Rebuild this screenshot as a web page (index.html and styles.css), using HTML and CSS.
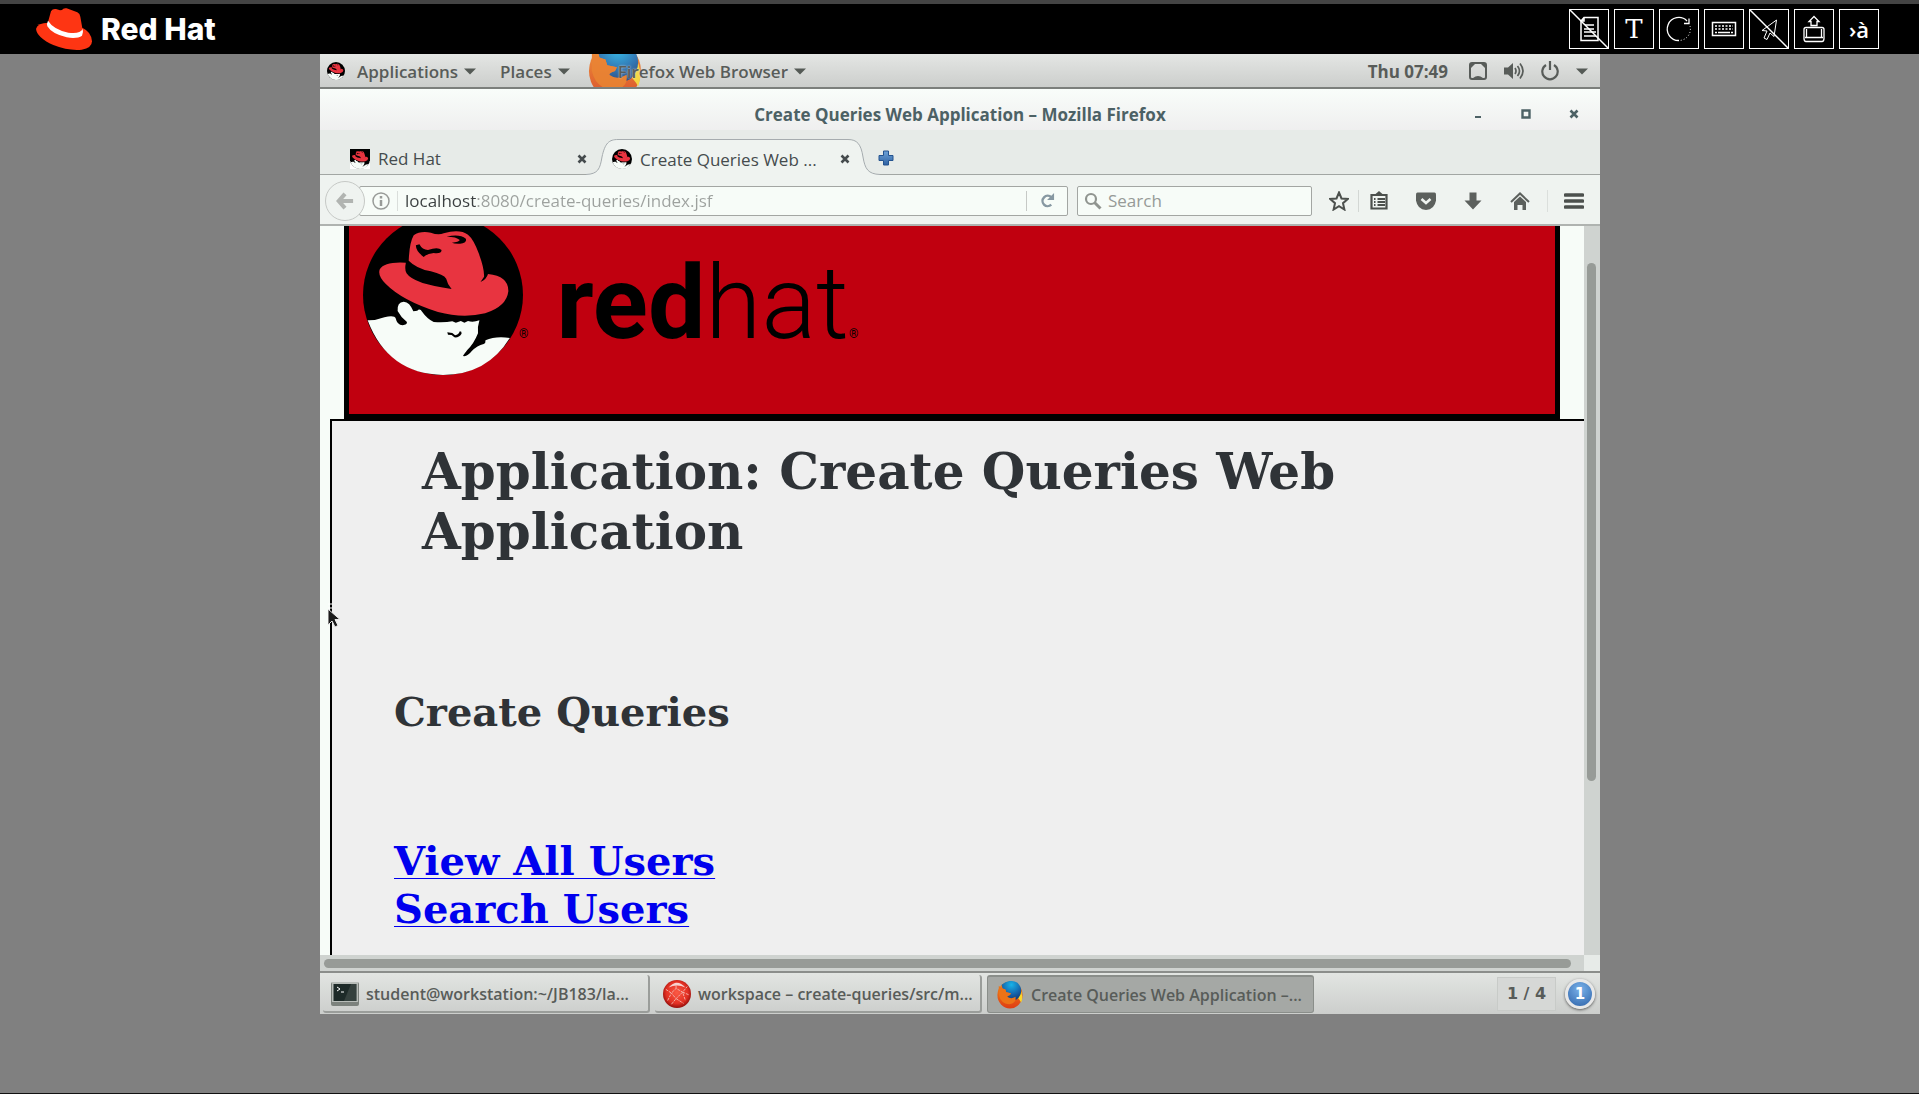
FILE: index.html
```html
<!DOCTYPE html>
<html lang="en">
<head>
<meta charset="utf-8">
<title>Red Hat Online Lab</title>
<link rel="stylesheet" href="styles.css">
</head>
<body>
<svg class="defs" aria-hidden="true">
  <defs>
    <radialGradient id="fox-blue" cx=".5" cy=".2" r=".8"><stop offset="0" stop-color="#19b3e8"/><stop offset=".6" stop-color="#1667ad"/><stop offset="1" stop-color="#123a7c"/></radialGradient>
    <linearGradient id="fox-orange" x1="0" y1="0" x2="0" y2="1"><stop offset="0" stop-color="#f08a1d"/><stop offset="1" stop-color="#df3d12"/></linearGradient>
    <radialGradient id="ball" cx=".5" cy=".45" r=".6"><stop offset="0" stop-color="#fb5a45"/><stop offset=".65" stop-color="#e23023"/><stop offset="1" stop-color="#7d0505"/></radialGradient>
    <linearGradient id="plus" x1="0" y1="0" x2="0" y2="1"><stop offset="0" stop-color="#6ea3d8"/><stop offset="1" stop-color="#2f62a3"/></linearGradient>
    <symbol id="firefox" viewBox="0 0 28 30">
      <ellipse cx="14" cy="15" rx="13.500" ry="14.500" fill="url(#fox-orange)"/>
      <path d="M24 7q5 8 2 16q-2-4-6-7z" fill="#fbd72a"/>
      <path d="M5 4Q13-3 22 2Q28 8 25 15Q22 22 15 20Q11 19 11 16L14 15L15 13L10 12L9 9L6 8Z" fill="url(#fox-blue)"/>
      <path d="M2 5Q4 8 9 9L10 12L15 13L14 15Q11 16 11 17Q15 20 20 17Q21 24 13 25Q4 24 2 15Z" fill="#ec7317"/>
    </symbol>
    <symbol id="shadowman" viewBox="120 15 448 480" preserveAspectRatio="none">
      <ellipse cx="344" cy="255" rx="224" ry="240" fill="#000"/>
      <path d="M133 331Q155 332 180 322Q208 314 212 326Q215 344 231 346Q244 344 243 336Q226 322 217 303Q215 276 234 275Q251 276 261 304L272 302Q279 294 286 306Q300 327 318 336Q350 338 370 334L380 338L394 333L404 338L414 333Q428 338 446 331Q440 351 442 370Q430 402 412 420Q402 434 400 438Q412 441 424 424Q440 406 458 402Q464 399 463 391Q490 378 531 384Q468 494 344 495Q190 492 133 331Z" fill="#f7fcf8"/>
      <path d="M356 367L370 369L378 376Q388 374 391 364Q397 364 396 371Q388 384 376 382L368 375L358 374Z"/>
      <path class="hat" d="M240 158Q236 180 242 190Q262 222 368 237Q356 222 353 206Q346 194 310 184Q270 176 248 152Q250 98 262 76Q280 62 310 68Q330 76 346 70Q390 56 414 74Q430 88 444 130Q460 176 459 200L449 216Q466 208 470 192Q528 198 527 244Q522 290 462 310Q400 326 330 306Q230 272 184 222Q160 196 167 178Q180 154 240 158Z"/>
      <path d="M268 106L278 103Q286 120 302 120Q330 110 340 120Q340 132 318 129Q300 130 290 141Q268 124 268 106ZM354 80Q390 70 408 86Q412 98 392 101Q376 102 369 98Q388 96 391 90Q382 80 354 80Z"/>
    </symbol>
    <symbol id="arrow" viewBox="0 0 12 7"><path d="M0 .5h12L6 6.500z" fill="#555a56"/></symbol>
    <symbol id="cross" viewBox="0 0 10 10"><path d="M1.500 1.500l7 7M8.500 1.500l-7 7" fill="none" stroke="currentColor" stroke-width="2.600"/></symbol>
  </defs>
</svg>

<header class="lab-bar">
  <a class="brand" href="#">
    <svg class="brand-hat" viewBox="108 24 168 126">
      <path fill="#fe3513" d="M145 68Q113 68 108 86Q110 112 160 135Q205 153 245 149Q276 144 276 124Q274 96 248 84Z"/>
      <path fill="#fe3513" d="M144 66L153 34Q158 25 168 27L180 31L186 30Q190 23 200 25L232 37Q240 41 241 50L249 96Q240 110 190 98Q150 86 144 66Z"/>
      <path fill="#fff" d="M144 62Q139 72 142 79Q156 102 200 112Q232 117 246 107Q251 98 248 87Q240 103 205 98Q160 88 144 62Z"/>
    </svg>
    <span class="brand-name">Red Hat</span>
  </a>
  <nav class="tools" aria-label="Console tools">
    <button class="tool" aria-label="Clipboard"><svg viewBox="0 0 38 38"><path d="M14 7.500h14v23H11V11zM14 8v3h-3M15 15h9M14 19h10M14 22h12M14 26h12" stroke-width="1.500"/><path d="M0 0l38 38" stroke-width="1.500"/></svg></button>
    <button class="tool tool-t" aria-label="Text">T</button>
    <button class="tool" aria-label="Refresh"><svg viewBox="0 0 38 38"><path d="M27 11A11.500 11.500 0 1 0 19 30.500M24 13.500h5v-5" stroke-width="1.300"/><path d="M30 16A11.500 11.500 0 0 1 19 30.500" stroke-dasharray="1 2"/></svg></button>
    <button class="tool" aria-label="Keyboard"><svg viewBox="0 0 38 38"><path d="M7.500 12.500h23v13h-23z" stroke-width="1.500"/><path d="M10 16h18M10 19h18" stroke-dasharray="2 1.500" stroke-width="1.500"/><path d="M10 22.500h2M13 22.500h12M26 22.500h2" stroke-width="1.500"/></svg></button>
    <button class="tool" aria-label="Pointer"><svg viewBox="0 0 38 38"><path d="M26.500 10L12 20.500l5 .500-3 7 3 1.500 3-6.500 4 3.500z"/><path d="M0 0l38 38" stroke-width="1.500"/></svg></button>
    <button class="tool" aria-label="Send keys"><svg viewBox="0 0 38 38"><path d="M19 6.500l5 5h-2v4h-6v-4h-2zM11 17.500h16q2 0 2 2v9q0 3-2 3H11q-2 0-2-3v-9q0-2 2-2zM10 27.500h18M11.500 19v8M26.500 19v8" stroke-width="1.300"/></svg></button>
    <button class="tool tool-a" aria-label="Input language">›à</button>
  </nav>
</header>

<main class="console">
  <div class="desktop">
    <div class="panel">
      <svg class="panel-hat"><use href="#shadowman"/></svg>
      <button class="menu menu-apps">Applications <svg class="caret"><use href="#arrow"/></svg></button>
      <button class="menu menu-places">Places <svg class="caret"><use href="#arrow"/></svg></button>
      <button class="menu menu-fox"><svg class="panel-fox"><use href="#firefox"/></svg><span class="fox-label">Firefox Web Browser</span> <svg class="caret"><use href="#arrow"/></svg></button>
      <time class="clock">Thu 07:49</time>
      <div class="status">
        <svg width="18" height="18" viewBox="0 0 18 18"><path d="M1 3q0-2 2-2h12q2 0 2 2v12q0 2-2 2H3q-2 0-2-2z" fill="none" stroke="#585c59" stroke-width="2"/><path d="M2 2h4L2 6zM16 2h-4l4 4zM4 16q5-4 10 0z" fill="#585c59"/></svg>
        <svg width="20" height="18" viewBox="0 0 20 18"><path d="M0 5.500h4L9 1v16l-5-4.500H0z" fill="#585c59"/><path d="M11 6q2 3 0 6M13.500 4q4 5 0 10M16 1.500q6 7.500 0 15" fill="none" stroke="#585c59" stroke-width="1.700"/></svg>
        <svg width="18" height="20" viewBox="0 0 18 20"><path d="M5 4a7.700 7.700 0 1 0 8 0M9 0v9" fill="none" stroke="#585c59" stroke-width="2.200"/></svg>
        <svg class="caret"><use href="#arrow"/></svg>
      </div>
    </div>

    <div class="titlebar">
      <span class="title">Create Queries Web Application – Mozilla Firefox</span>
      <button class="win-btn" aria-label="Minimize"><svg viewBox="0 0 10 10"><path d="M2 8h6" stroke="currentColor" stroke-width="2"/></svg></button>
      <button class="win-btn" aria-label="Maximize"><svg viewBox="0 0 10 10"><path d="M1.500 1.500h7v7h-7z" fill="none" stroke="currentColor" stroke-width="2.400"/></svg></button>
      <button class="win-btn" aria-label="Close window"><svg><use href="#cross"/></svg></button>
    </div>

    <div class="tabs">
      <div class="tab">
        <svg class="favicon square"><use href="#shadowman"/></svg>
        <span class="tab-name">Red Hat</span>
        <button class="tab-close" aria-label="Close tab"><svg><use href="#cross"/></svg></button>
      </div>
      <div class="tab active">
        <svg class="tab-shape" viewBox="0 0 294 46" preserveAspectRatio="none"><path d="M0 44.500C12 44 14 39 16 27C19 13 23 9.500 32 9.500H262C271 9.500 275 14 277 27C279 39 282 44 294 44.500V46H0Z" fill="#eff3f0"/><path d="M0 44.500C12 44 14 39 16 27C19 13 23 9.500 32 9.500H262C271 9.500 275 14 277 27C279 39 282 44 294 44.500" fill="none" stroke="#a6acaf"/></svg>
        <svg class="favicon"><use href="#shadowman"/></svg>
        <span class="tab-name">Create Queries Web ...</span>
        <button class="tab-close" aria-label="Close tab"><svg><use href="#cross"/></svg></button>
      </div>
      <div class="tab-rest">
        <button class="new-tab" aria-label="New tab"><svg viewBox="0 0 16 16"><path d="M5.500 1h5v4.500H15v5h-4.500V15h-5v-4.500H1v-5h4.500z" fill="url(#plus)" stroke="#24538f"/></svg></button>
      </div>
    </div>

    <div class="navbar">
      <button class="back" aria-label="Back"><svg viewBox="0 0 20 20"><path d="M10 2L3 10l7 8M3 10h16" fill="none" stroke="#b1b4b1" stroke-width="4.500"/></svg></button>
      <div class="url">
        <svg class="info" viewBox="0 0 18 18"><circle cx="9" cy="9" r="8" fill="none" stroke="#989b98" stroke-width="1.500"/><path d="M9 4v2.500M9 8v6" stroke="#989b98" stroke-width="2.500"/></svg>
        <input class="url-input" aria-label="Address" value="localhost:8080/create-queries/index.jsf">
        <button class="reload" aria-label="Reload"><svg viewBox="0 0 16 16"><path d="M12 4.500A5.500 5.500 0 1 0 12 12.500" fill="none" stroke="#8798a2" stroke-width="2.600"/><path d="M15 0v7.500H7.500z" fill="#8798a2"/></svg></button>
      </div>
      <div class="search">
        <svg class="lens" viewBox="0 0 18 18"><circle cx="7" cy="7" r="5" fill="none" stroke="#909590" stroke-width="2.200"/><path d="M10.500 10.500l6 6" stroke="#909590" stroke-width="3"/></svg>
        <input class="search-input" aria-label="Search" placeholder="Search">
      </div>
      <div class="nav-icons">
        <button class="icon" aria-label="Bookmark"><svg viewBox="0 0 20 20"><path d="M10 1.500l2.500 6 6.200.500-4.700 4.200 1.400 6.300L10 15.200l-5.400 3.300L6 12.200 1.300 8l6.200-.500z" fill="none" stroke="#4c504d" stroke-width="2"/></svg></button>
        <button class="icon split" aria-label="Bookmarks list"><svg viewBox="0 0 20 20"><path d="M2.500 4h15v13.500h-15z" fill="#eff3f0" stroke="#4c504d" stroke-width="2.200"/><path d="M6 3.500h8L10 0z" fill="#4c504d"/><path d="M5 8h1.500M5 11h1.500M5 14h1.500M8.500 8H16M8.500 11H16M8.500 14H16" stroke="#4c504d" stroke-width="2"/></svg></button>
        <button class="icon" aria-label="Pocket"><svg viewBox="0 0 20 20"><path d="M1.500 1.500h17q1.500 0 1.500 2v6Q18.500 18.500 10 19 1.500 18.500 0 9.500v-6q0-2 1.500-2z" fill="#5c605d"/><path d="M5.500 8L10 12l4.500-4" fill="none" stroke="#eff3f0" stroke-width="2.600"/></svg></button>
        <button class="icon" aria-label="Downloads"><svg viewBox="0 0 20 20"><path d="M6.500 1.500h7v8h5L10 18.500 1.500 9.500h5z" fill="#5c605d"/></svg></button>
        <button class="icon" aria-label="Home"><svg viewBox="0 0 20 20"><path d="M1 11l9-8.500 9 8.500" fill="none" stroke="#5c605d" stroke-width="2"/><path d="M4 11l6-5.500 6 5.500v8h-3.500v-5h-5v5H4z" fill="#5c605d"/></svg></button>
        <button class="icon hamburger" aria-label="Menu"><svg viewBox="0 0 20 20"><path d="M1.500 4h17M1.500 10h17M1.500 16h17" stroke="#4c504d" stroke-width="3.600" stroke-linecap="round"/></svg></button>
      </div>
    </div>

    <div class="viewport">
      <div class="page">
        <div class="banner">
          <svg class="banner-man" viewBox="0 11 160 149"><svg width="160" height="160"><use href="#shadowman"/></svg></svg>
          <span class="reg reg-man">®</span>
          <span class="wordmark"><b>red</b>hat</span><span class="reg">®</span>
        </div>
        <section class="content">
          <h1 class="app-title">Application: Create Queries Web Application</h1>
          <h2 class="app-sub">Create Queries</h2>
          <div class="links">
            <a href="#">View All Users</a>
            <a href="#">Search Users</a>
          </div>
        </section>
        <svg class="cursor" viewBox="0 0 14 26"><path d="M0 1h4M0 5h4" stroke="#fff"/><path d="M0 6L12 16.500H7l3 6-3 1.500-3-6-4 4z" fill="#1b1b1b" stroke="#e8e8e8"/></svg>
      </div>
      <div class="vscroll"><div class="vthumb"></div></div>
      <div class="hscroll"><div class="hthumb"></div></div>
      <div class="corner"></div>
    </div>

    <div class="taskbar">
      <button class="task"><svg class="task-icon" viewBox="0 0 28 26"><rect width="28" height="24" y="1" rx="2" fill="#7c827d"/><rect x="1" y="1" width="26" height="20" fill="#b8bdb9"/><rect x="2.500" y="3" width="23" height="17" fill="#1d2a28"/><path d="M13 20L20 3h5v17z" fill="#35413e"/><path d="M6 6l3 2-3 2M10 11h3" stroke="#fff" fill="none"/></svg><span>student@workstation:~/JB183/la...</span></button>
      <button class="task"><svg class="task-icon" viewBox="0 0 30 30"><circle cx="15" cy="15" r="15" fill="url(#ball)"/><path d="M3 10l6 4 5-5 7 4 5-6M5 22l4-8 5 6 7-7 3 9M9 26l5-6 8 5M14 9V3M21 13l7 3" stroke="#f3b5ad" fill="none" stroke-dasharray="3 1"/><path d="M6 8Q15-2 24 8Q15 4 6 8Z" fill="#f7d3d0"/></svg><span>workspace – create-queries/src/m...</span></button>
      <button class="task current"><svg class="task-icon"><use href="#firefox"/></svg><span>Create Queries Web Application –...</span></button>
      <span class="spacer"></span>
      <button class="workspace">1 / 4</button>
      <button class="badge" aria-label="1 notification">1</button>
    </div>
  </div>
</main>
</body>
</html>
```
FILE: styles.css
```css
* { box-sizing: border-box; }

body {
  margin: 0;
  min-height: 100vh;
  display: flex;
  flex-direction: column;
  background: #808080;
  border-bottom: 1px solid #111;
  font-family: "Open Sans", "Noto Sans", sans-serif;
  font-size: 17px;
}

button {
  border: 0;
  padding: 0;
  background: none;
  color: inherit;
  font: inherit;
}

input { min-width: 0; border: 0; padding: 0; outline: 0; font: inherit; }
svg { display: block; flex: none; }
.defs { position: absolute; width: 0; height: 0; }

/* Lab header */
.lab-bar {
  display: flex;
  justify-content: space-between;
  align-items: center;
  height: 54px;
  padding: 0 40px 0 36px;
  border-top: 4px solid #444;
  background: #000;
}
.brand { display: flex; align-items: center; gap: 9px; color: #fff; text-decoration: none; }
.brand-hat { width: 56px; height: 42px; }
.brand-name { font: 800 30px/42px Inter, sans-serif; }
.tools { display: flex; gap: 5px; }
.tool { width: 40px; height: 40px; border: 1px solid #fff; color: #fff; }
.tool svg { width: 38px; height: 38px; fill: none; stroke: #fff; }
.tool-t { font: 26px/36px "DejaVu Serif", serif; }
.tool-a { font: 600 22px/36px "Open Sans", sans-serif; }

/* Remote desktop */
.console { flex: 1; display: flex; padding: 0 319px 79px 320px; }
.desktop { flex: 1; min-width: 0; display: flex; flex-direction: column; background: #f7fcf8; }

.panel {
  display: flex;
  align-items: center;
  height: 35px;
  padding: 1px 12px 0 7px;
  border-bottom: 2px solid #7c7f7c;
  background: linear-gradient(#e4e6e4, #cccecc);
  color: #585c59;
  font-weight: 600;
  overflow: hidden;
}
.panel-hat { width: 18px; height: 18px; }
.menu { display: flex; align-items: center; gap: 6px; }
.menu-apps { margin-left: 12px; }
.menu-places { margin-left: 24px; }
.menu-fox { margin-left: 18px; }
.panel-fox { width: 54px; height: 58px; margin-right: -30px; opacity: .85; }
.fox-label { position: relative; text-shadow: 0 0 2px #ddd; }
.caret { width: 12px; height: 7px; }
.clock { margin-left: auto; margin-right: 21px; font-weight: 700; }
.status { display: flex; align-items: center; gap: 17px; }
.hat { fill: #e83440; }

.titlebar {
  display: flex;
  align-items: center;
  gap: 38px;
  height: 41px;
  padding: 9px 21px 0 0;
  background: linear-gradient(#f9fdfa, #efefef);
  color: #4c6165;
}
.title { flex: 1; margin-left: 165px; text-align: center; font-weight: 700; }
.win-btn svg { width: 10px; height: 10px; }

.tabs { display: flex; height: 45px; background: #e7ebe8; color: #454b4d; }
.tab { display: flex; align-items: center; width: 266px; padding: 13px 0 0 30px; border-bottom: 1px solid #a2a6a3; }
.tab.active { position: relative; width: 294px; padding-left: 26px; border: 0; }
.tab-shape { position: absolute; inset: 0; width: 100%; height: 46px; }
.favicon { position: relative; width: 20px; height: 20px; margin-right: 8px; }
.favicon.square { background: linear-gradient(#000 60%, #fff 60%); }
.tab-name { position: relative; flex: 1; white-space: nowrap; }
.tab-close { position: relative; margin-right: -1px; }
.active .tab-close { margin-right: 30px; }
.tab-close svg { width: 10px; height: 10px; }
.tab-rest { flex: 1; display: flex; align-items: center; padding-top: 12px; border-bottom: 1px solid #a2a6a3; }
.new-tab { margin-left: -2px; position: relative; }
.new-tab svg { width: 16px; height: 16px; }

.navbar {
  display: flex;
  align-items: center;
  height: 51px;
  padding: 2px 16px 0 5px;
  border-bottom: 2px solid #afb3b0;
  background: #eff3f0;
}
.back {
  display: grid;
  place-items: center;
  width: 40px;
  height: 40px;
  margin-right: -6px;
  border: 1px solid #c6c9c6;
  border-radius: 50%;
  background: #eff3f0;
  position: relative;
}
.back svg { width: 18px; height: 18px; }
.url, .search { display: flex; align-items: center; height: 30px; border: 1px solid #a3a6a3; border-radius: 2px; background: #f7fcf8; }
.url { flex: 1; }
.info { width: 18px; height: 18px; margin-left: 12px; }
.url-input {
  flex: 1;
  height: 20px;
  margin-left: 7px;
  padding-left: 7px;
  border-left: 1px solid #dadedb;
  background: linear-gradient(90deg, #3a3f40 79px, #9da19e 79px) text;
  -webkit-background-clip: text;
  color: transparent;
}
.reload { display: grid; place-items: center; width: 41px; height: 20px; border-left: 1px solid #c6c9c6; }
.reload svg { width: 15px; height: 15px; }
.search { width: 235px; margin-left: 9px; padding-left: 6px; }
.lens { width: 18px; height: 18px; }
.search-input { flex: 1; margin-left: 6px; background: none; }
.search-input::placeholder { color: #969a97; opacity: 1; }
.nav-icons { display: flex; gap: 27px; margin-left: 17px; }
.icon { display: grid; place-items: center; width: 20px; height: 22px; }
.icon svg { width: 20px; height: 20px; }
.split { width: 31px; margin-left: -18px; padding-left: 10px; border-left: 1px solid #d3d7d4; }
.hamburger { width: 37px; margin-left: -10px; padding-left: 16px; border-left: 1px solid #dbdfdc; }

/* Web page */
.viewport { flex: 1; display: grid; grid-template: 1fr 16px / 1fr 16px; }
.page { position: relative; display: flex; flex-direction: column; background: #f7fcf8; }
.banner {
  display: flex;
  align-items: flex-start;
  height: 193px;
  margin: 0 24px;
  border: 5px solid #000;
  border-top: 0;
  background: #c0000f;
  font-family: Roboto, sans-serif;
}
.banner-man { width: 160px; height: 149px; margin-left: 14px; }
.wordmark { margin-left: 28px; font-size: 102px; font-weight: 300; line-height: 154px; }
.wordmark b { font-weight: 700; }
.reg { margin-top: 102px; font-size: 12px; line-height: 12px; }
.reg-man { margin-left: -4px; }
.content {
  flex: 1;
  margin-left: 10px;
  padding: 21px 62px 0;
  border: solid #000;
  border-width: 2px 0 0 2px;
  background: #efefef;
  color: #2f3337;
  font-family: "DejaVu Serif", serif;
}
.app-title { max-width: 980px; margin: 0 28px; font-size: 50px; line-height: 60px; }
.app-sub { margin: 126px 0 0; font-size: 40px; line-height: 48px; }
.links { display: flex; flex-direction: column; align-items: flex-start; margin-top: 101px; font-size: 40px; font-weight: 700; line-height: 48px; }
.links a { color: #0000ee; text-decoration-thickness: 1px; text-underline-offset: 3px; }
.cursor { position: absolute; left: 8px; top: 377px; width: 14px; height: 26px; }
.vscroll { padding: 37px 4px 0 3px; background: #cfd3d0; }
.vthumb { height: 75%; max-height: 518px; border-radius: 5px; background: #979b97; }
.hscroll { padding: 4px 13px 4px 4px; background: #cfd3d0; }
.hthumb { height: 9px; border-radius: 5px; background: #979b97; }
.corner { background: #e7ebe8; }

/* Task list */
.taskbar {
  display: flex;
  align-items: center;
  gap: 5px;
  height: 43px;
  padding: 0 5px 0 3px;
  border-top: 2px solid #8b8e8b;
  background: linear-gradient(#e2e5e2, #cccecc);
  color: #585c59;
  font-size: 16px;
  font-weight: 600;
}
.task {
  display: flex;
  align-items: center;
  gap: 7px;
  width: 327px;
  height: 38px;
  padding: 2px 8px 0;
  border-right: 2px solid #9a9d9a;
  border-bottom: 2px solid #9a9d9a;
  border-radius: 3px;
  white-space: nowrap;
}
.task.current { border: 1px solid #8a8e8a; border-top-width: 2px; background: #a5a8a5; }
.task-icon { width: 28px; height: 28px; }
.spacer { flex: 1; }
.workspace { width: 59px; height: 34px; border: 1px solid #c8cbc8; background: #d6d8d6; font: 700 16px "DejaVu Sans", sans-serif; }
.badge {
  width: 30px;
  height: 30px;
  margin-left: 4px;
  border: 3px solid #e8e8e8;
  border-radius: 50%;
  background: radial-gradient(circle at 50% 30%, #7ab2ea, #2d62a8);
  box-shadow: 0 1px 3px #555;
  color: #fff;
  font: 700 15px/22px "DejaVu Sans", sans-serif;
}
```
